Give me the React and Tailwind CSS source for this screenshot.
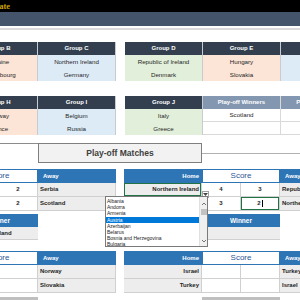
import React from "react";

function GroupCol({ title, cells, cellBg, headBg = "bg-[#333f4f]" }) {
  return (
    <div className="w-[78px] shrink-0 border-r border-[#c8ccd2]">
      <div className={`h-[13px] ${headBg} text-white font-bold text-[6px] flex items-center justify-center`}>
        {title}
      </div>
      {cells.map((c, i) => (
        <div
          key={i}
          className={`h-[13px] ${cellBg} text-[6.2px] text-[#262626] flex items-center justify-center`}
        >
          {c}
        </div>
      ))}
    </div>
  );
}

function MatchHeader() {
  return (
    <div className="flex h-[14px] text-[6px] font-bold">
      <div className="w-[78px] shrink-0 bg-[#2e75b6] text-white flex items-center justify-end pr-[3px]">Home</div>
      <div className="w-[78px] shrink-0 bg-white border border-[#2e75b6] text-[#2f5597] font-normal text-[8px] flex items-center justify-center">
        Score
      </div>
      <div className="w-[78px] shrink-0 bg-[#2e75b6] text-white flex items-center pl-[5px]">Away</div>
    </div>
  );
}

function MatchRow({ home, a, b, away, homeSel, bSel }) {
  return (
    <div className="flex h-[14px] text-[6px] font-bold text-[#1f1f1f]">
      <div
        className={`w-[78px] shrink-0 bg-[#ededed] border-b border-r border-[#d0d0d0] flex items-center justify-end pr-[2px] ${
          homeSel ? "ring-1 ring-inset ring-[#217346]" : ""
        }`}
      >
        {home}
      </div>
      <div className="w-[39px] shrink-0 bg-white border-b border-r border-[#d0d0d0] flex items-center justify-center">{a}</div>
      <div
        className={`w-[39px] shrink-0 bg-white border-b border-r border-[#d0d0d0] flex items-center justify-center ${
          bSel ? "ring-1 ring-inset ring-[#217346]" : ""
        }`}
      >
        {b}
        {bSel && <span className="w-[1px] h-[7px] bg-black ml-[1px]" />}
      </div>
      <div className="w-[78px] shrink-0 bg-[#ededed] border-b border-r border-[#d0d0d0] flex items-center pl-[2px]">{away}</div>
    </div>
  );
}

function WinnerBlock({ name }) {
  return (
    <div className="w-[78px] shrink-0 text-[6.5px] font-bold">
      <div className="h-[13px] bg-[#2e75b6] text-white flex items-center justify-center">Winner</div>
      <div className="h-[13px] bg-[#ededed] border-b border-[#d0d0d0] text-[#1f1f1f] text-[6px] flex items-center justify-center">
        {name}
      </div>
    </div>
  );
}

const countries = [
  "Albania",
  "Andorra",
  "Armenia",
  "Austria",
  "Azerbaijan",
  "Belarus",
  "Bosnia and Herzegovina",
  "Bulgaria",
];

export default function App() {
  return (
    <div className="w-[300px] h-[300px] overflow-hidden bg-white relative font-['Liberation_Sans',Arial,sans-serif]">
      <div className="h-[12px] bg-black overflow-hidden">
        <div className="ml-[-200px] w-[210px] text-right text-[8.5px] leading-[12px] font-bold text-[#c9a000] font-['Liberation_Serif',serif]">
          Euro 2020 Qualifying Template
        </div>
      </div>
      <div className="h-[14px] bg-[#44546a]" />
      <div className="h-[2px]" />
      <div className="h-[2px] bg-[#d9d9d9]" />

      <div className="mt-[12px] flex ml-[-40px]">
        <GroupCol title="Group B" cells={["Ukraine", "Luxembourg"]} cellBg="bg-[#fce4d6]" />
        <GroupCol title="Group C" cells={["Northern Ireland", "Germany"]} cellBg="bg-[#ddebf7]" />
        <div className="w-[9px] shrink-0" />
        <GroupCol title="Group D" cells={["Republic of Ireland", "Denmark"]} cellBg="bg-[#e2efda]" />
        <GroupCol title="Group E" cells={["Hungary", "Slovakia"]} cellBg="bg-[#fce4d6]" />
        <GroupCol title="Group F" cells={["Sweden", "Norway"]} cellBg="bg-[#ddebf7]" />
      </div>

      <div className="mt-[15px] flex ml-[-40px]">
        <GroupCol title="Group H" cells={["Norway", "France"]} cellBg="bg-[#fce4d6]" />
        <GroupCol title="Group I" cells={["Belgium", "Russia"]} cellBg="bg-[#ddebf7]" />
        <div className="w-[9px] shrink-0" />
        <GroupCol title="Group J" cells={["Italy", "Greece"]} cellBg="bg-[#e2efda]" />
        <div className="w-[78px] shrink-0 border-r border-[#d9d9d9]">
          <div className="h-[13px] bg-[#8497b0] text-white font-bold text-[6px] flex items-center justify-center">
            Play-off Winners
          </div>
          <div className="h-[13px] border-b border-[#d9d9d9] text-[6.2px] text-[#262626] flex items-center justify-center">
            Scotland
          </div>
          <div className="h-[13px] border-b border-[#d9d9d9]" />
        </div>
        <div className="w-[78px] shrink-0">
          <div className="h-[13px] bg-[#8497b0] text-white font-bold text-[6px] flex items-center justify-center">
            Play-off Winners
          </div>
          <div className="h-[13px] border-b border-[#d9d9d9]" />
          <div className="h-[13px] border-b border-[#d9d9d9]" />
        </div>
      </div>

      <div className="mt-[8px] flex h-[20px]">
        <div className="w-[38px] shrink-0 border-t border-[#8c8c8c]" />
        <div className="w-[164px] shrink-0 bg-[#f2f2f2] border border-[#7f7f7f] flex items-center justify-center text-[8.5px] font-bold text-[#404040]">
          Play-off Matches
        </div>
        <div className="flex-1 flex items-center">
          <div className="w-full h-[1px] bg-[#b0b0b0]" />
        </div>
      </div>

      <div className="mt-[6px] ml-[-118px]">
        <div className="flex">
          <MatchHeader />
          <div className="w-[8px] shrink-0" />
          <MatchHeader />
        </div>
        <div className="flex">
          <MatchRow home="Bulgaria" a="1" b="2" away="Serbia" />
          <div className="w-[8px] shrink-0" />
          <MatchRow home="Northern Ireland" a="4" b="3" away="Republic of Ireland" homeSel />
        </div>
        <div className="flex">
          <MatchRow home="Israel" a="1" b="2" away="Scotland" />
          <div className="w-[8px] shrink-0" />
          <MatchRow home="Republic of Ireland" a="3" b="2" away="Northern Ireland" bSel />
        </div>
        <div className="flex mt-[3px]">
          <div className="w-[78px] shrink-0" />
          <WinnerBlock name="Scotland" />
          <div className="w-[164px] shrink-0" />
          <WinnerBlock name="" />
        </div>

        <div className="flex mt-[11px]">
          <MatchHeader />
          <div className="w-[8px] shrink-0" />
          <MatchHeader />
        </div>
        <div className="flex">
          <MatchRow home="Iceland" a="" b="" away="Norway" />
          <div className="w-[8px] shrink-0" />
          <MatchRow home="Israel" a="" b="" away="Turkey" />
        </div>
        <div className="flex">
          <MatchRow home="Wales" a="" b="" away="Slovakia" />
          <div className="w-[8px] shrink-0" />
          <MatchRow home="Turkey" a="" b="" away="Israel" />
        </div>
        <div className="flex mt-[4px]">
          <div className="w-[78px] shrink-0" />
          <div className="w-[78px] shrink-0 h-[3px] bg-[#bfbfbf]" />
          <div className="w-[164px] shrink-0" />
          <div className="w-[78px] shrink-0 h-[3px] bg-[#bfbfbf]" />
        </div>
      </div>

      {/* cell dropdown button */}
      <div className="absolute left-[202px] top-[191px] w-[7px] h-[7px] bg-white border border-[#a0a0a0] flex items-center justify-center">
        <svg width="5" height="3" viewBox="0 0 5 3">
          <path d="M0 0 L5 0 L2.5 3 Z" fill="#444" />
        </svg>
      </div>

      {/* open dropdown list */}
      <div className="absolute left-[105px] top-[196px] w-[103px] h-[51px] bg-white border border-[#7a7a7a] flex overflow-hidden">
        <div className="flex-1 pt-[1px] overflow-hidden">
          {countries.map((c) => (
            <div
              key={c}
              className={`h-[6.2px] leading-[6.2px] text-[5px] pl-[1px] whitespace-nowrap ${
                c === "Austria" ? "bg-[#0078d7] text-white" : "text-[#222]"
              }`}
            >
              {c}
            </div>
          ))}
        </div>
        <div className="w-[8px] shrink-0 bg-[#f0f0f0] border-l border-[#e0e0e0] flex flex-col items-center">
          <svg width="6" height="6" viewBox="0 0 6 6" className="mt-[4px]">
            <path d="M1 4 L3 2 L5 4" fill="none" stroke="#555" strokeWidth="0.8" />
          </svg>
          <div className="w-[6px] h-[6px] bg-[#c2c2c2] mt-[2px]" />
          <div className="flex-1" />
          <svg width="6" height="6" viewBox="0 0 6 6" className="mb-[2px]">
            <path d="M1 2 L3 4 L5 2" fill="none" stroke="#555" strokeWidth="0.8" />
          </svg>
        </div>
      </div>
    </div>
  );
}
